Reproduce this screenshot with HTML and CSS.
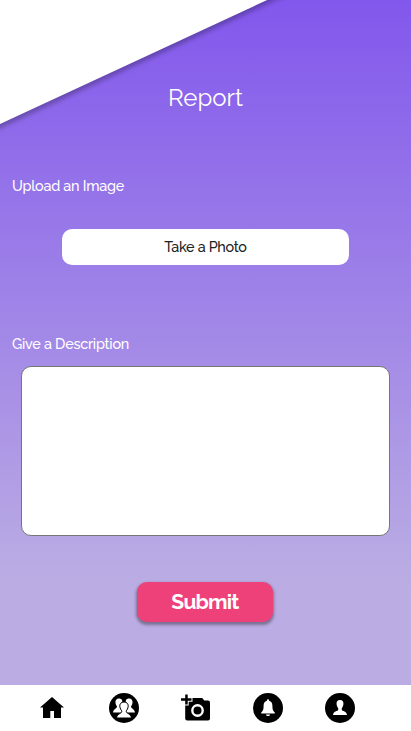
FILE: index.html
```html
<!DOCTYPE html>
<html lang="en">
<head>
    <meta charset="UTF-8">
    <meta name="viewport" content="width=device-width, initial-scale=1.0">
    <title>Report</title>
    <link rel="stylesheet" href="styles.css">
</head>
<body>
    <div class="page">
        <div class="corner"></div>
        <main class="container">
            <h1>Report</h1>
            <form class="report-form">
                <label class="upload-label" for="photo">Upload an Image</label>
                <button type="button" class="photo-btn" id="photo">Take a Photo</button>
                <label class="description-label" for="description">Give a Description</label>
                <textarea id="description"></textarea>
                <button type="submit" class="submit-btn">Submit</button>
            </form>
        </main>

        <nav class="navbar">
            <a href="#" aria-label="Home">
                <svg viewBox="0 0 30 30">
                    <path d="M15 4 27 14.5H24V25H17V18H13.3V25H6V14.5H3Z"/>
                </svg>
            </a>
            <a href="#" aria-label="Friends">
                <svg viewBox="0 0 30 30">
                    <circle cx="15" cy="15" r="15"/>
                    <g class="light">
                        <path d="M10 5.5C7.5 5.5 6.2 7.2 6.5 9.8 6.7 11.6 7.5 12.5 8 13.5 8 15.5 4.5 16 4 19.5H14V12L13 7C12.4 6 11.3 5.5 10 5.5Z"/>
                        <path d="M20 5.5C22.5 5.5 23.8 7.2 23.5 9.8 23.3 11.6 22.5 12.5 22 13.5 22 15.5 25.5 16 26 19.5H16V12L17 7C17.6 6 18.7 5.5 20 5.5Z"/>
                        <path class="outlined" d="M15 9C12 9 10.5 11 10.8 13.7 11 15.5 11.9 16.8 12.7 17.8 13.4 21 8.4 19.8 7.5 25H22.5C21.6 19.8 16.6 21 17.3 17.8 18.1 16.8 19 15.5 19.2 13.7 19.5 11 18 9 15 9Z"/>
                    </g>
                </svg>
            </a>
            <a href="#" aria-label="Report">
                <svg viewBox="0 0 30 30">
                    <path d="M4.2 1.5H6.7V5.3H10.5V7.8H6.7V11.5H4.2V7.8H0V5.3H4.2Z"/>
                    <path d="M11.5 5H21.2L23.3 7.5H27Q29 7.5 29 9.5V25.5Q29 27.5 27 27.5H6.2Q4.2 27.5 4.2 25.5V12.5H7.7V8.7H11.5Z"/>
                    <circle class="lens" cx="16.5" cy="17.5" r="5.2"/>
                </svg>
            </a>
            <a href="#" aria-label="Notifications">
                <svg viewBox="0 0 30 30">
                    <circle cx="15" cy="15" r="15"/>
                    <path class="light" d="M15 6.3C14.2 6.3 13.9 7 13.9 7.8 11.5 8.4 10.6 10.4 10.6 12.8 10.6 16.5 10 17.9 8.2 19.5V20.6H21.8V19.5C20 17.9 19.4 16.5 19.4 12.8 19.4 10.4 18.5 8.4 16.1 7.8 16.1 7 15.8 6.3 15 6.3ZM12.9 21.4C13.2 23.6 16.8 23.6 17.1 21.4Z"/>
                </svg>
            </a>
            <a href="#" aria-label="Profile">
                <svg viewBox="0 0 30 30">
                    <circle cx="15" cy="15" r="15"/>
                    <path class="light" d="M15 7C12.2 7 11.3 8.8 11.6 11.3 11.7 13 12.6 14.3 13.2 15.2V17C12.6 18.3 8.3 18.1 8 22H22C21.7 18.1 17.4 18.3 16.8 17V15.2C17.4 14.3 18.3 13 18.4 11.3 18.7 8.8 17.8 7 15 7Z"/>
                </svg>
            </a>
        </nav>
    </div>
</body>
</html>
```

FILE: styles.css
```css
* {
    box-sizing: border-box;
}
body {
    margin: 0;
    font-family: Raleway, Lato, sans-serif;
    color: white;
}
.page {
    position: relative;
    display: flex;
    flex-direction: column;
    height: 100vh;
    overflow: hidden;
    background: linear-gradient(180deg, #8257ec 0%, #bbade3 80%);
}
/* tilted white panel in the top left corner */
.corner {
    position: absolute;
    left: -100px;
    bottom: calc(100% - 124px);
    width: 450px;
    height: 300px;
    background: white;
    transform: rotate(-24.9deg);
    transform-origin: 100px 100%;
    box-shadow: 0 4px 4px rgba(0, 0, 0, 0.25);
}
.container {
    flex: 1;
    position: relative;
}
h1 {
    margin: 83px 0 0;
    font-size: 24px;
    line-height: 30px;
    font-weight: 400;
    text-align: center;
}
.report-form {
    display: flex;
    flex-direction: column;
    align-items: center;
}
label {
    align-self: flex-start;
    margin-left: 12px;
    font-size: 14.4px;
    line-height: 20px;
    font-weight: 500;
    letter-spacing: -0.25px;
}
.upload-label {
    margin-top: 63px;
}
.description-label {
    margin-top: 69px;
}
.photo-btn {
    width: 287px;
    height: 36px;
    margin-top: 33px;
    padding: 0 0 1px;
    border: none;
    border-radius: 10px;
    background: white;
    color: #212121;
    font-family: inherit;
    font-size: 14.4px;
    font-weight: 500;
    letter-spacing: -0.3px;
}
textarea {
    width: 369px;
    height: 170px;
    margin-top: 12px;
    border: 1px solid #767676;
    border-radius: 10px;
    background: white;
    resize: none;
}
.submit-btn {
    width: 136px;
    height: 40px;
    margin: 46px 1px 0 0;
    padding: 0 0 2px;
    border: none;
    border-radius: 10px;
    background: #ee4079;
    color: white;
    font-family: inherit;
    font-size: 21px;
    font-weight: 700;
    letter-spacing: -0.8px;
    box-shadow: 0 2px 3px 1px rgba(0, 0, 0, 0.35);
}
.navbar {
    display: flex;
    height: 46px;
    padding: 8px 16px 0;
    background: white;
    position: relative;
}
.navbar a {
    width: 72px;
    display: flex;
    justify-content: center;
    color: black;
}
.navbar svg {
    width: 30px;
    height: 30px;
    fill: black;
}
.navbar .light {
    fill: white;
}
.navbar .outlined {
    stroke: black;
    stroke-width: 1;
}
.navbar .lens {
    fill: none;
    stroke: white;
    stroke-width: 2.4;
}
```
